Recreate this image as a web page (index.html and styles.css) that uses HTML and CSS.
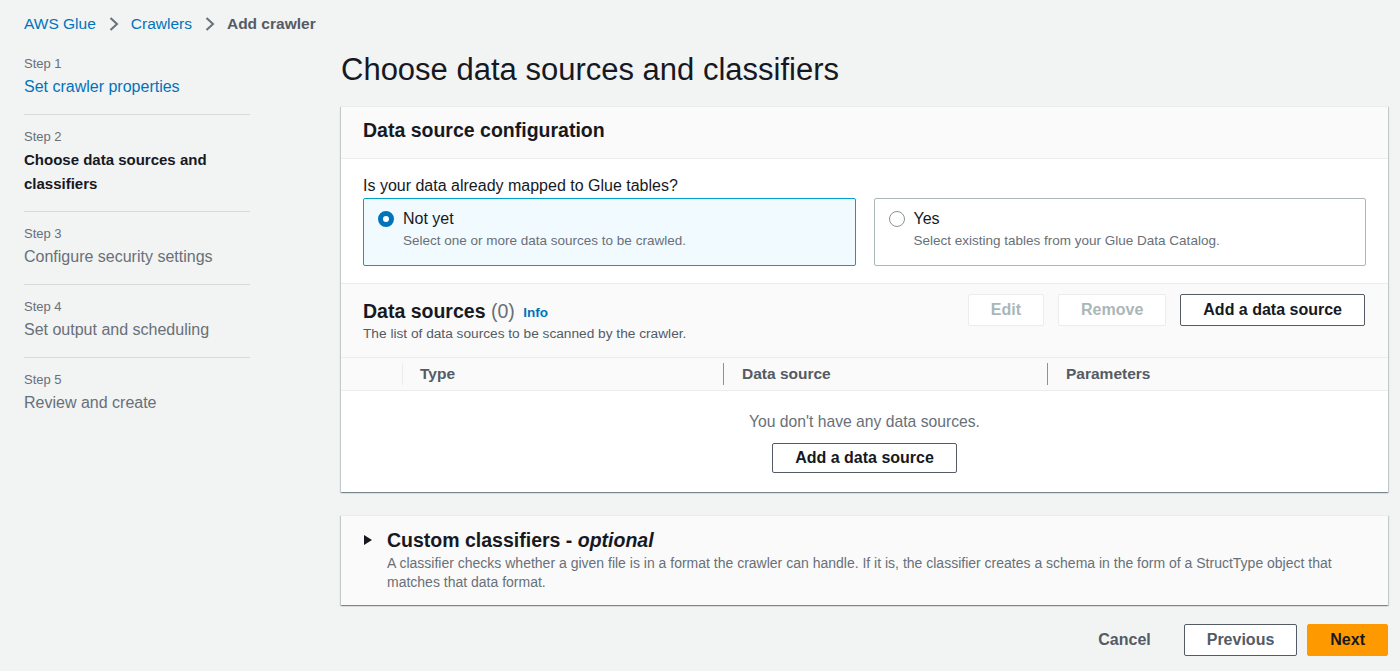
FILE: index.html
```html
<!DOCTYPE html>
<html lang="en">
<head>
<meta charset="utf-8">
<title>Add crawler</title>
<link rel="stylesheet" href="styles.css">
</head>
<body>
<div class="page">
  <nav class="breadcrumbs">
    <a class="crumb-link">AWS Glue</a>
    <svg class="chev" width="12" height="16" viewBox="0 0 12 16"><path d="M2.5 2 L9 8 L2.5 14" fill="none" stroke="#687078" stroke-width="2"/></svg>
    <a class="crumb-link">Crawlers</a>
    <svg class="chev" width="12" height="16" viewBox="0 0 12 16"><path d="M2.5 2 L9 8 L2.5 14" fill="none" stroke="#687078" stroke-width="2"/></svg>
    <span class="crumb-current">Add crawler</span>
  </nav>

  <div class="layout">
    <aside class="steps">
      <div class="step">
        <div class="step-label">Step 1</div>
        <div class="step-title step-link">Set crawler properties</div>
      </div>
      <div class="step">
        <div class="step-label">Step 2</div>
        <div class="step-title step-current">Choose data sources and classifiers</div>
      </div>
      <div class="step">
        <div class="step-label">Step 3</div>
        <div class="step-title">Configure security settings</div>
      </div>
      <div class="step">
        <div class="step-label">Step 4</div>
        <div class="step-title">Set output and scheduling</div>
      </div>
      <div class="step step-last">
        <div class="step-label">Step 5</div>
        <div class="step-title">Review and create</div>
      </div>
    </aside>

    <main class="main">
      <h1 class="page-title">Choose data sources and classifiers</h1>

      <section class="card">
        <div class="card-header">
          <h2 class="card-title">Data source configuration</h2>
        </div>
        <div class="card-body">
          <div class="question">Is your data already mapped to Glue tables?</div>
          <div class="tiles">
            <div class="tile tile-selected">
              <span class="radio radio-checked"></span>
              <div class="tile-text">
                <div class="tile-title">Not yet</div>
                <div class="tile-desc">Select one or more data sources to be crawled.</div>
              </div>
            </div>
            <div class="tile">
              <span class="radio"></span>
              <div class="tile-text">
                <div class="tile-title">Yes</div>
                <div class="tile-desc">Select existing tables from your Glue Data Catalog.</div>
              </div>
            </div>
          </div>
        </div>

        <div class="ds-header">
          <div class="ds-titles">
            <h2 class="card-title">Data sources <span class="count">(0)</span> <a class="info">Info</a></h2>
            <div class="ds-sub">The list of data sources to be scanned by the crawler.</div>
          </div>
          <div class="ds-actions">
            <button class="btn btn-disabled">Edit</button>
            <button class="btn btn-disabled">Remove</button>
            <button class="btn btn-normal">Add a data source</button>
          </div>
        </div>

        <div class="table-head">
          <div class="th"></div>
          <div class="th"><span class="th-label th-first">Type</span></div>
          <div class="th"><span class="th-label">Data source</span></div>
          <div class="th"><span class="th-label">Parameters</span></div>
        </div>

        <div class="empty">
          <div class="empty-text">You don't have any data sources.</div>
          <button class="btn btn-normal">Add a data source</button>
        </div>
      </section>

      <section class="card card-expand">
        <svg class="caret" width="10" height="12" viewBox="0 0 10 12"><polygon points="1,1 9,6 1,11" fill="#16191f"/></svg>
        <div class="expand-text">
          <h2 class="card-title expand-title">Custom classifiers - <i>optional</i></h2>
          <div class="expand-desc">A classifier checks whether a given file is in a format the crawler can handle. If it is, the classifier creates a schema in the form of a StructType object that matches that data format.</div>
        </div>
      </section>

      <div class="footer">
        <button class="btn btn-link">Cancel</button>
        <button class="btn btn-secondary">Previous</button>
        <button class="btn btn-primary">Next</button>
      </div>
    </main>
  </div>
</div>
</body>
</html>
```

FILE: styles.css
```css
* { box-sizing: border-box; }

html, body {
  margin: 0;
  padding: 0;
  background: #f2f3f3;
  font-family: "Liberation Sans", Arial, sans-serif;
  color: #16191f;
}

.page {
  padding: 13px 12px 0 24px;
}

.breadcrumbs {
  display: flex;
  align-items: center;
  height: 22px;
  font-size: 15.5px;
  line-height: 22px;
}

.crumb-link { color: #0073bb; }

.chev { margin: 0 11px 0 12px; display: block; }

.crumb-current { color: #545b64; font-weight: bold; }

.layout {
  display: grid;
  grid-template-columns: 226px 1fr;
  column-gap: 91px;
}

.steps { padding-top: 7px; }

.step {
  padding: 11px 0 15px;
  border-bottom: 1px solid #d5dbdb;
}

.step-last { border-bottom: none; }

.step-label {
  font-size: 13px;
  line-height: 22px;
  color: #687078;
}

.step-title {
  font-size: 16px;
  line-height: 24px;
  color: #687078;
}

.step-link { color: #0073bb; }

.step-current {
  color: #16191f;
  font-weight: bold;
  font-size: 15px;
}

.main { min-width: 0; }

.page-title {
  margin: 17px 0 18px;
  font-size: 31px;
  line-height: 36px;
  font-weight: normal;
  color: #16191f;
}

.card {
  background: #ffffff;
  border-top: 1px solid #eaeded;
  box-shadow: 0 1px 1px 0 rgba(0, 28, 36, 0.3), 1px 1px 1px 0 rgba(0, 28, 36, 0.15), -1px 1px 1px 0 rgba(0, 28, 36, 0.15);
}

.card-header {
  background: #fafafa;
  border-bottom: 1px solid #eaeded;
  padding: 11px 22px 16px;
}

.card-title {
  margin: 0;
  font-size: 19.5px;
  line-height: 24px;
  font-weight: bold;
  color: #16191f;
}

.card-body {
  padding: 16px 22px 17px;
}

.question {
  font-size: 16px;
  line-height: 22px;
  margin-bottom: 1px;
}

.tiles {
  display: grid;
  grid-template-columns: 1fr 1fr;
  column-gap: 18px;
}

.tile {
  display: flex;
  align-items: flex-start;
  gap: 9px;
  border: 1px solid #aab7b8;
  border-radius: 2px;
  padding: 9px 14px 13px;
  background: #ffffff;
}

.tile-selected {
  border-color: #00a1c9;
  background: #f1faff;
}

.radio {
  flex: none;
  width: 16px;
  height: 16px;
  margin-top: 3px;
  border-radius: 50%;
  border: 1.5px solid #879596;
  background: #ffffff;
}

.radio-checked {
  border: 5px solid #0073bb;
}

.tile-title {
  font-size: 16px;
  line-height: 22px;
}

.tile-desc {
  font-size: 13.5px;
  line-height: 22px;
  color: #687078;
}

.ds-header {
  display: flex;
  justify-content: space-between;
  align-items: flex-start;
  background: #fafafa;
  border-top: 1px solid #eaeded;
  border-bottom: 1px solid #eaeded;
  padding: 10px 23px 14px 22px;
}

.ds-titles { padding-top: 5px; }

.count { font-weight: normal; color: #687078; }

.info {
  font-size: 13.5px;
  font-weight: bold;
  color: #0073bb;
  margin-left: 3px;
  vertical-align: 1px;
}

.ds-sub {
  font-size: 13.7px;
  line-height: 18px;
  color: #545b64;
}

.ds-actions {
  display: flex;
  gap: 14px;
}

.btn {
  font-family: "Liberation Sans", Arial, sans-serif;
  font-size: 16px;
  font-weight: bold;
  line-height: 20px;
  padding: 5px 22px;
  border-radius: 2px;
  border: 1px solid #545b64;
  background: #ffffff;
  color: #545b64;
  cursor: pointer;
}

.btn-disabled {
  border-color: #eaeded;
  color: #aab7b8;
}

.btn-normal {
  color: #16191f;
}

.table-head {
  display: grid;
  grid-template-columns: 61px 321px 324px 1fr;
  height: 33px;
  background: #fafafa;
  border-bottom: 1px solid #eaeded;
}

.th {
  display: flex;
  align-items: center;
}

.th-label {
  display: block;
  border-left: 1px solid #879596;
  padding-left: 18px;
  line-height: 22px;
  font-size: 15.5px;
  font-weight: bold;
  color: #545b64;
}

.th-first { border-left-color: #eaeded; padding-left: 17px; }

.empty {
  display: flex;
  flex-direction: column;
  align-items: center;
  padding: 20px 0 19px;
}

.empty-text {
  font-size: 15.7px;
  line-height: 22px;
  color: #687078;
  margin-bottom: 10px;
}

.empty .btn { padding: 4px 22px; }

.card-expand {
  margin-top: 23px;
  background: #fafafa;
  display: flex;
  align-items: flex-start;
  padding: 12px 22px 13px;
}

.caret {
  flex: none;
  display: block;
  margin: 6px 14px 0 0;
}

.expand-title i { font-style: italic; }

.expand-desc {
  margin-top: 2px;
  font-size: 14px;
  line-height: 19px;
  color: #687078;
}

.footer {
  display: flex;
  justify-content: flex-end;
  gap: 10px;
  margin-top: 19px;
}

.btn-link {
  border-color: transparent;
  background: transparent;
  color: #545b64;
}

.btn-secondary {
  color: #545b64;
}

.btn-primary {
  background: #ff9900;
  border-color: #ff9900;
  color: #16191f;
}
```
